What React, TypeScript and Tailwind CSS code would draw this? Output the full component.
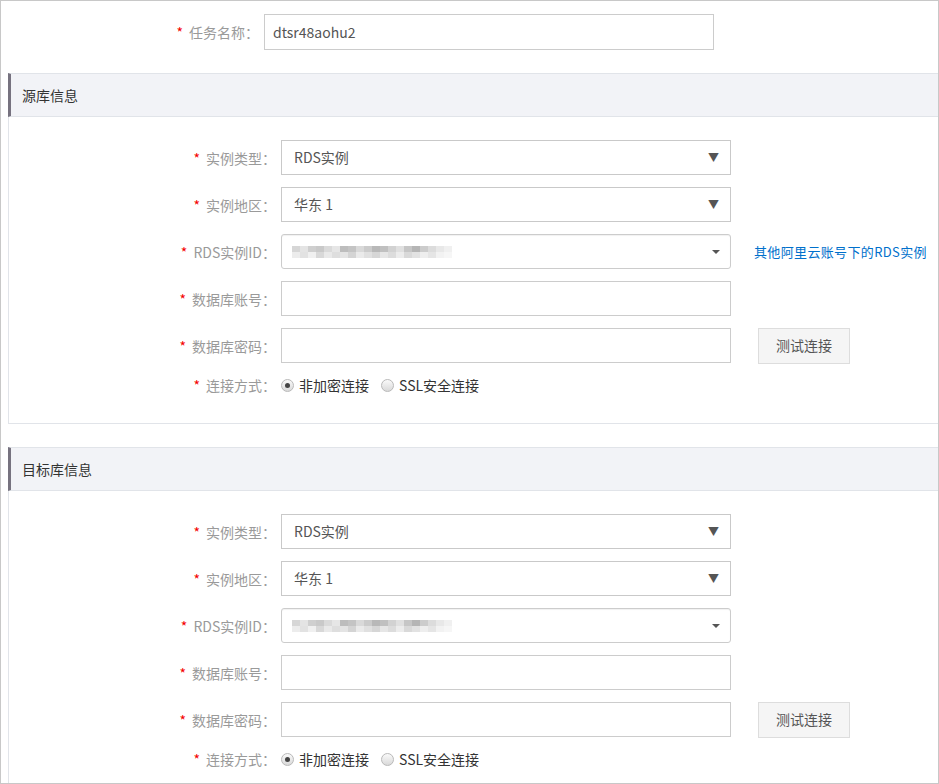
import { ReactNode } from "react";

const FONT = "font-['Noto_Sans_CJK_SC','Noto_Sans',sans-serif]";

// pixelated (masked) instance id, two rows of gray cells
const MASK_TOP = ["#d6d6d6", "#e4e4e4", "#cfcfcf", "#c9c9c9", "#dadada", "#e6e6e6", "#bdbdbd", "#c4c4c4", "#d9d9d9", "#cbcbcb", "#b8b8b8", "#c0c0c0", "#d2d2d2", "#e0e0e0", "#c6c6c6", "#b5b5b5", "#cccccc", "#dcdcdc", "#e8e8e8", "#f0f0f0"];
const MASK_BOTTOM = ["#ececec", "#e2e2e2", "#f0f0f0", "#d8d8d8", "#e9e9e9", "#dedede", "#e4e4e4", "#d4d4d4", "#eaeaea", "#e0e0e0", "#d6d6d6", "#e6e6e6", "#dcdcdc", "#ececec", "#d9d9d9", "#e2e2e2", "#eeeeee", "#e5e5e5", "#f2f2f2", "#f6f6f6"];

function Label({ children, width }: { children: ReactNode; width: string }) {
  return (
    <div className={`${width} shrink-0 text-right text-[14px] text-[#9a9a9a] leading-none`}>
      <span className="text-[#f40000] mr-[6px]">*</span>
      {children}
    </div>
  );
}

function FormRow({ label, children }: { label: string; children: ReactNode }) {
  return (
    <div className="flex items-center h-[35px]">
      <Label width="w-[267px]">{label}</Label>
      <div className="ml-[5px] flex items-center">{children}</div>
    </div>
  );
}

function Select({ value }: { value: string }) {
  return (
    <div className="w-[450px] h-[35px] border border-[#c9c9c9] bg-white flex items-center justify-between pl-[12px] pr-[11px]">
      <span className="text-[14px] text-[#555]">{value}</span>
      <span className="text-[11px] text-[#555]">▼</span>
    </div>
  );
}

function MaskedSelect() {
  return (
    <div className="w-[450px] h-[35px] border border-[#cccccc] rounded-[3px] shadow-[inset_0_1px_1px_rgba(0,0,0,0.06)] bg-white flex items-center justify-between pl-[10px] pr-[10px]">
      <div className="flex flex-col">
        <div className="flex">
          {MASK_TOP.map((c, i) => (
            <div key={i} className="w-[8px] h-[6px]" style={{ backgroundColor: c }} />
          ))}
        </div>
        <div className="flex">
          {MASK_BOTTOM.map((c, i) => (
            <div key={i} className="w-[8px] h-[6px]" style={{ backgroundColor: c }} />
          ))}
        </div>
      </div>
      <div className="w-0 h-0 border-l-[4px] border-r-[4px] border-t-[4px] border-l-transparent border-r-transparent border-t-[#555]" />
    </div>
  );
}

function Input({ value }: { value?: string }) {
  return (
    <div className="w-[450px] h-[35px] border border-[#cccccc] bg-white flex items-center pl-[10px] text-[14px] text-[#555]">
      {value}
    </div>
  );
}

function Radio({ checked, label }: { checked?: boolean; label: string }) {
  return (
    <div className="flex items-center">
      <div className="w-[13px] h-[13px] rounded-full border border-[#b9b9b9] bg-gradient-to-b from-[#fafafa] to-[#d9d9d9] flex items-center justify-center">
        {checked && <div className="w-[5px] h-[5px] rounded-full bg-[#444]" />}
      </div>
      <span className="ml-[5px] text-[14px] text-[#333]">{label}</span>
    </div>
  );
}

function DbSection({ title, showLink }: { title: string; showLink?: boolean }) {
  return (
    <div className="ml-[7px]">
      <div className="h-[44px] bg-[#f2f3f7] border-t border-b border-[#e1e4e9] border-l-[3px] border-l-[#76727f] flex items-center pl-[11px] text-[14px] text-[#333]">
        {title}
      </div>
      <div className="border-l border-b border-[#e1e4e9] pt-[23px] pb-[28px] flex flex-col gap-[12px]">
        <FormRow label="实例类型：">
          <Select value="RDS实例" />
        </FormRow>
        <FormRow label="实例地区：">
          <Select value="华东 1" />
        </FormRow>
        <FormRow label="RDS实例ID：">
          <MaskedSelect />
          {showLink && (
            <a className="ml-[23px] text-[13px] tracking-[0.35px] text-[#0070cc] whitespace-nowrap">其他阿里云账号下的RDS实例</a>
          )}
        </FormRow>
        <FormRow label="数据库账号：">
          <Input />
        </FormRow>
        <FormRow label="数据库密码：">
          <Input />
          <button className="ml-[27px] w-[92px] h-[36px] bg-[#f5f5f5] border border-[#dddddd] text-[14px] text-[#555]">
            测试连接
          </button>
        </FormRow>
        <div className="flex items-center h-[20px]">
          <Label width="w-[267px]">连接方式：</Label>
          <div className="ml-[5px] flex items-center gap-[12px]">
            <Radio checked label="非加密连接" />
            <Radio label="SSL安全连接" />
          </div>
        </div>
      </div>
    </div>
  );
}

export default function App() {
  return (
    <div className={`w-[939px] h-[784px] border border-[#c8c8c8] bg-white overflow-hidden ${FONT}`}>
      {/* Task name */}
      <div className="flex items-center mt-[13px] h-[36px]">
        <Label width="w-[258px]">任务名称：</Label>
        <div className="ml-[5px] w-[450px] h-[36px] border border-[#cccccc] flex items-center pl-[8px] text-[14px] text-[#555]">
          dtsr48aohu2
        </div>
      </div>

      <div className="mt-[23px]">
        <DbSection title="源库信息" showLink />
      </div>
      <div className="mt-[23px]">
        <DbSection title="目标库信息" />
      </div>
    </div>
  );
}
